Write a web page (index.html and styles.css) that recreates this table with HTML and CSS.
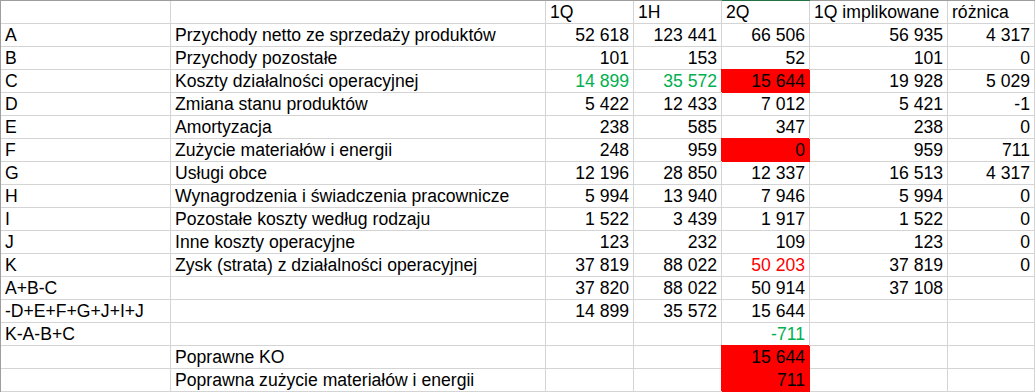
FILE: index.html
```html
<!DOCTYPE html>
<html lang="pl">
<head>
<meta charset="utf-8">
<title>Arkusz</title>
<link rel="stylesheet" href="styles.css">
</head>
<body>
<div class="sheet">
  <div class="c"></div><div class="c"></div><div class="c">1Q</div><div class="c">1H</div><div class="c active">2Q</div><div class="c">1Q implikowane</div><div class="c">różnica</div>

  <div class="c">A</div><div class="c">Przychody netto ze sprzedaży produktów</div><div class="c n">52 618</div><div class="c n">123 441</div><div class="c n">66 506</div><div class="c n">56 935</div><div class="c n">4 317</div>

  <div class="c">B</div><div class="c">Przychody pozostałe</div><div class="c n">101</div><div class="c n">153</div><div class="c n">52</div><div class="c n">101</div><div class="c n">0</div>

  <div class="c">C</div><div class="c">Koszty działalności operacyjnej</div><div class="c n green">14 899</div><div class="c n green">35 572</div><div class="c n fill">15 644</div><div class="c n">19 928</div><div class="c n">5 029</div>

  <div class="c">D</div><div class="c">Zmiana stanu produktów</div><div class="c n">5 422</div><div class="c n">12 433</div><div class="c n">7 012</div><div class="c n">5 421</div><div class="c n">-1</div>

  <div class="c">E</div><div class="c">Amortyzacja</div><div class="c n">238</div><div class="c n">585</div><div class="c n">347</div><div class="c n">238</div><div class="c n">0</div>

  <div class="c">F</div><div class="c">Zużycie materiałów i energii</div><div class="c n">248</div><div class="c n">959</div><div class="c n fill">0</div><div class="c n">959</div><div class="c n">711</div>

  <div class="c">G</div><div class="c">Usługi obce</div><div class="c n">12 196</div><div class="c n">28 850</div><div class="c n">12 337</div><div class="c n">16 513</div><div class="c n">4 317</div>

  <div class="c">H</div><div class="c">Wynagrodzenia i świadczenia pracownicze</div><div class="c n">5 994</div><div class="c n">13 940</div><div class="c n">7 946</div><div class="c n">5 994</div><div class="c n">0</div>

  <div class="c">I</div><div class="c">Pozostałe koszty według rodzaju</div><div class="c n">1 522</div><div class="c n">3 439</div><div class="c n">1 917</div><div class="c n">1 522</div><div class="c n">0</div>

  <div class="c">J</div><div class="c">Inne koszty operacyjne</div><div class="c n">123</div><div class="c n">232</div><div class="c n">109</div><div class="c n">123</div><div class="c n">0</div>

  <div class="c">K</div><div class="c">Zysk (strata) z działalności operacyjnej</div><div class="c n">37 819</div><div class="c n">88 022</div><div class="c n red">50 203</div><div class="c n">37 819</div><div class="c n">0</div>

  <div class="c">A+B-C</div><div class="c"></div><div class="c n">37 820</div><div class="c n">88 022</div><div class="c n">50 914</div><div class="c n">37 108</div><div class="c"></div>

  <div class="c">-D+E+F+G+J+I+J</div><div class="c"></div><div class="c n">14 899</div><div class="c n">35 572</div><div class="c n">15 644</div><div class="c"></div><div class="c"></div>

  <div class="c">K-A-B+C</div><div class="c"></div><div class="c"></div><div class="c"></div><div class="c n green">-711</div><div class="c"></div><div class="c"></div>

  <div class="c"></div><div class="c">Poprawne KO</div><div class="c"></div><div class="c"></div><div class="c n fill">15 644</div><div class="c"></div><div class="c"></div>

  <div class="c"></div><div class="c">Poprawna zużycie materiałów i energii</div><div class="c"></div><div class="c"></div><div class="c n fill">711</div><div class="c"></div><div class="c"></div>
</div>
</body>
</html>
```
FILE: styles.css
```css
html, body {
  margin: 0;
  padding: 0;
  background: #ffffff;
}

.sheet {
  display: grid;
  grid-template-columns: 170px 375px 88px 88px 88px 138px 87px;
  grid-auto-rows: 23px;
  width: 1034px;
  border-left: 1px solid #9e9e9e;
  border-top: 1px solid #9e9e9e;
  font-family: "Liberation Sans", Arial, sans-serif;
  font-size: 17.6px;
  color: #000000;
}

.c {
  box-sizing: border-box;
  border-right: 1px solid #d4d4d4;
  border-bottom: 1px solid #d4d4d4;
  padding: 0 4px;
  line-height: 23px;
  white-space: nowrap;
  overflow: visible;
}

.n {
  text-align: right;
}

.green {
  color: #00b050;
}

.red {
  color: #ff0000;
}

.fill {
  background: #ff0000;
  border-right-color: #ff0000;
  border-bottom-color: #ff0000;
  box-shadow: -1px -1px 0 0 #ff0000;
}

.active {
  box-shadow: 0 -1px 0 0 #217346;
}
```
